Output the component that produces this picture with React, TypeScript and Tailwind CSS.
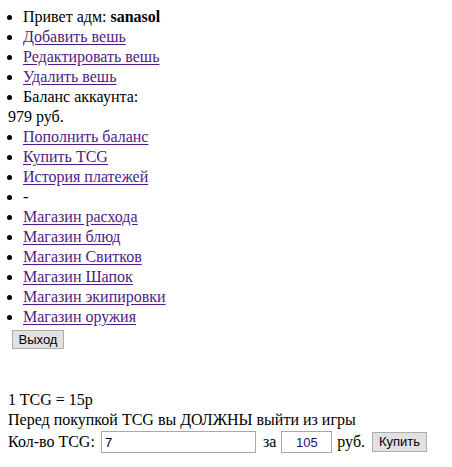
export default function App() {
  const links1 = ['Добавить вешь', 'Редактировать вешь', 'Удалить вешь'];
  const links2 = ['Пополнить баланс', 'Купить TCG', 'История платежей'];
  const shops = [
    'Магазин расхода',
    'Магазин блюд',
    'Магазин Свитков',
    'Магазин Шапок',
    'Магазин экипировки',
    'Магазин оружия',
  ];
  const link = 'text-[#4f1a86] underline underline-offset-[2px]';

  return (
    <div className="min-h-[467px] w-[452px] bg-white pt-[7px] font-['Liberation_Serif',serif] text-[16px] leading-[20px] text-black">
      <ul className="list-disc pl-[23px]">
        <li>
          Привет адм: <b>sanasol</b>
        </li>
        {links1.map((t) => (
          <li key={t}>
            <a href="#" className={link}>{t}</a>
          </li>
        ))}
        <li>Баланс аккаунта:</li>
      </ul>
      <div className="pl-[8px]">979 руб.</div>
      <ul className="list-disc pl-[23px]">
        {links2.map((t) => (
          <li key={t}>
            <a href="#" className={link}>{t}</a>
          </li>
        ))}
        <li>-</li>
        {shops.map((t) => (
          <li key={t}>
            <a href="#" className={link}>{t}</a>
          </li>
        ))}
      </ul>
      <button className="ml-[12px] mt-[3px] h-[19px] w-[52px] border border-[#adadad] bg-[#e1e1e1] font-['Liberation_Sans',sans-serif] text-[13px] leading-[17px] text-black">
        Выход
      </button>

      {/* TCG purchase */}
      <div className="mt-[41px] pl-[8px]">
        <div>1 TCG = 15р</div>
        <div>Перед покупкой TCG вы ДОЛЖНЫ выйти из игры</div>
        <div className="mt-[1px] flex items-center">
          <span>Кол-во TCG:</span>
          <input
            type="text"
            defaultValue="7"
            className="ml-[6px] h-[22px] w-[155px] border border-[#a9a9a9] px-[3px] font-['Liberation_Sans',sans-serif] text-[13px] text-black outline-none"
          />
          <span className="ml-[7px]">за</span>
          <input
            type="text"
            defaultValue="105"
            className="ml-[5px] h-[22px] w-[51px] border border-[#a9a9a9] text-center font-['Liberation_Sans',sans-serif] text-[13px] text-[#1f0f6e] outline-none"
          />
          <span className="ml-[5px]">руб.</span>
          <button className="ml-[7px] h-[20px] w-[55px] border border-[#adadad] bg-[#e1e1e1] font-['Liberation_Sans',sans-serif] text-[13px] leading-[18px] text-black">
            Купить
          </button>
        </div>
      </div>
    </div>
  );
}
